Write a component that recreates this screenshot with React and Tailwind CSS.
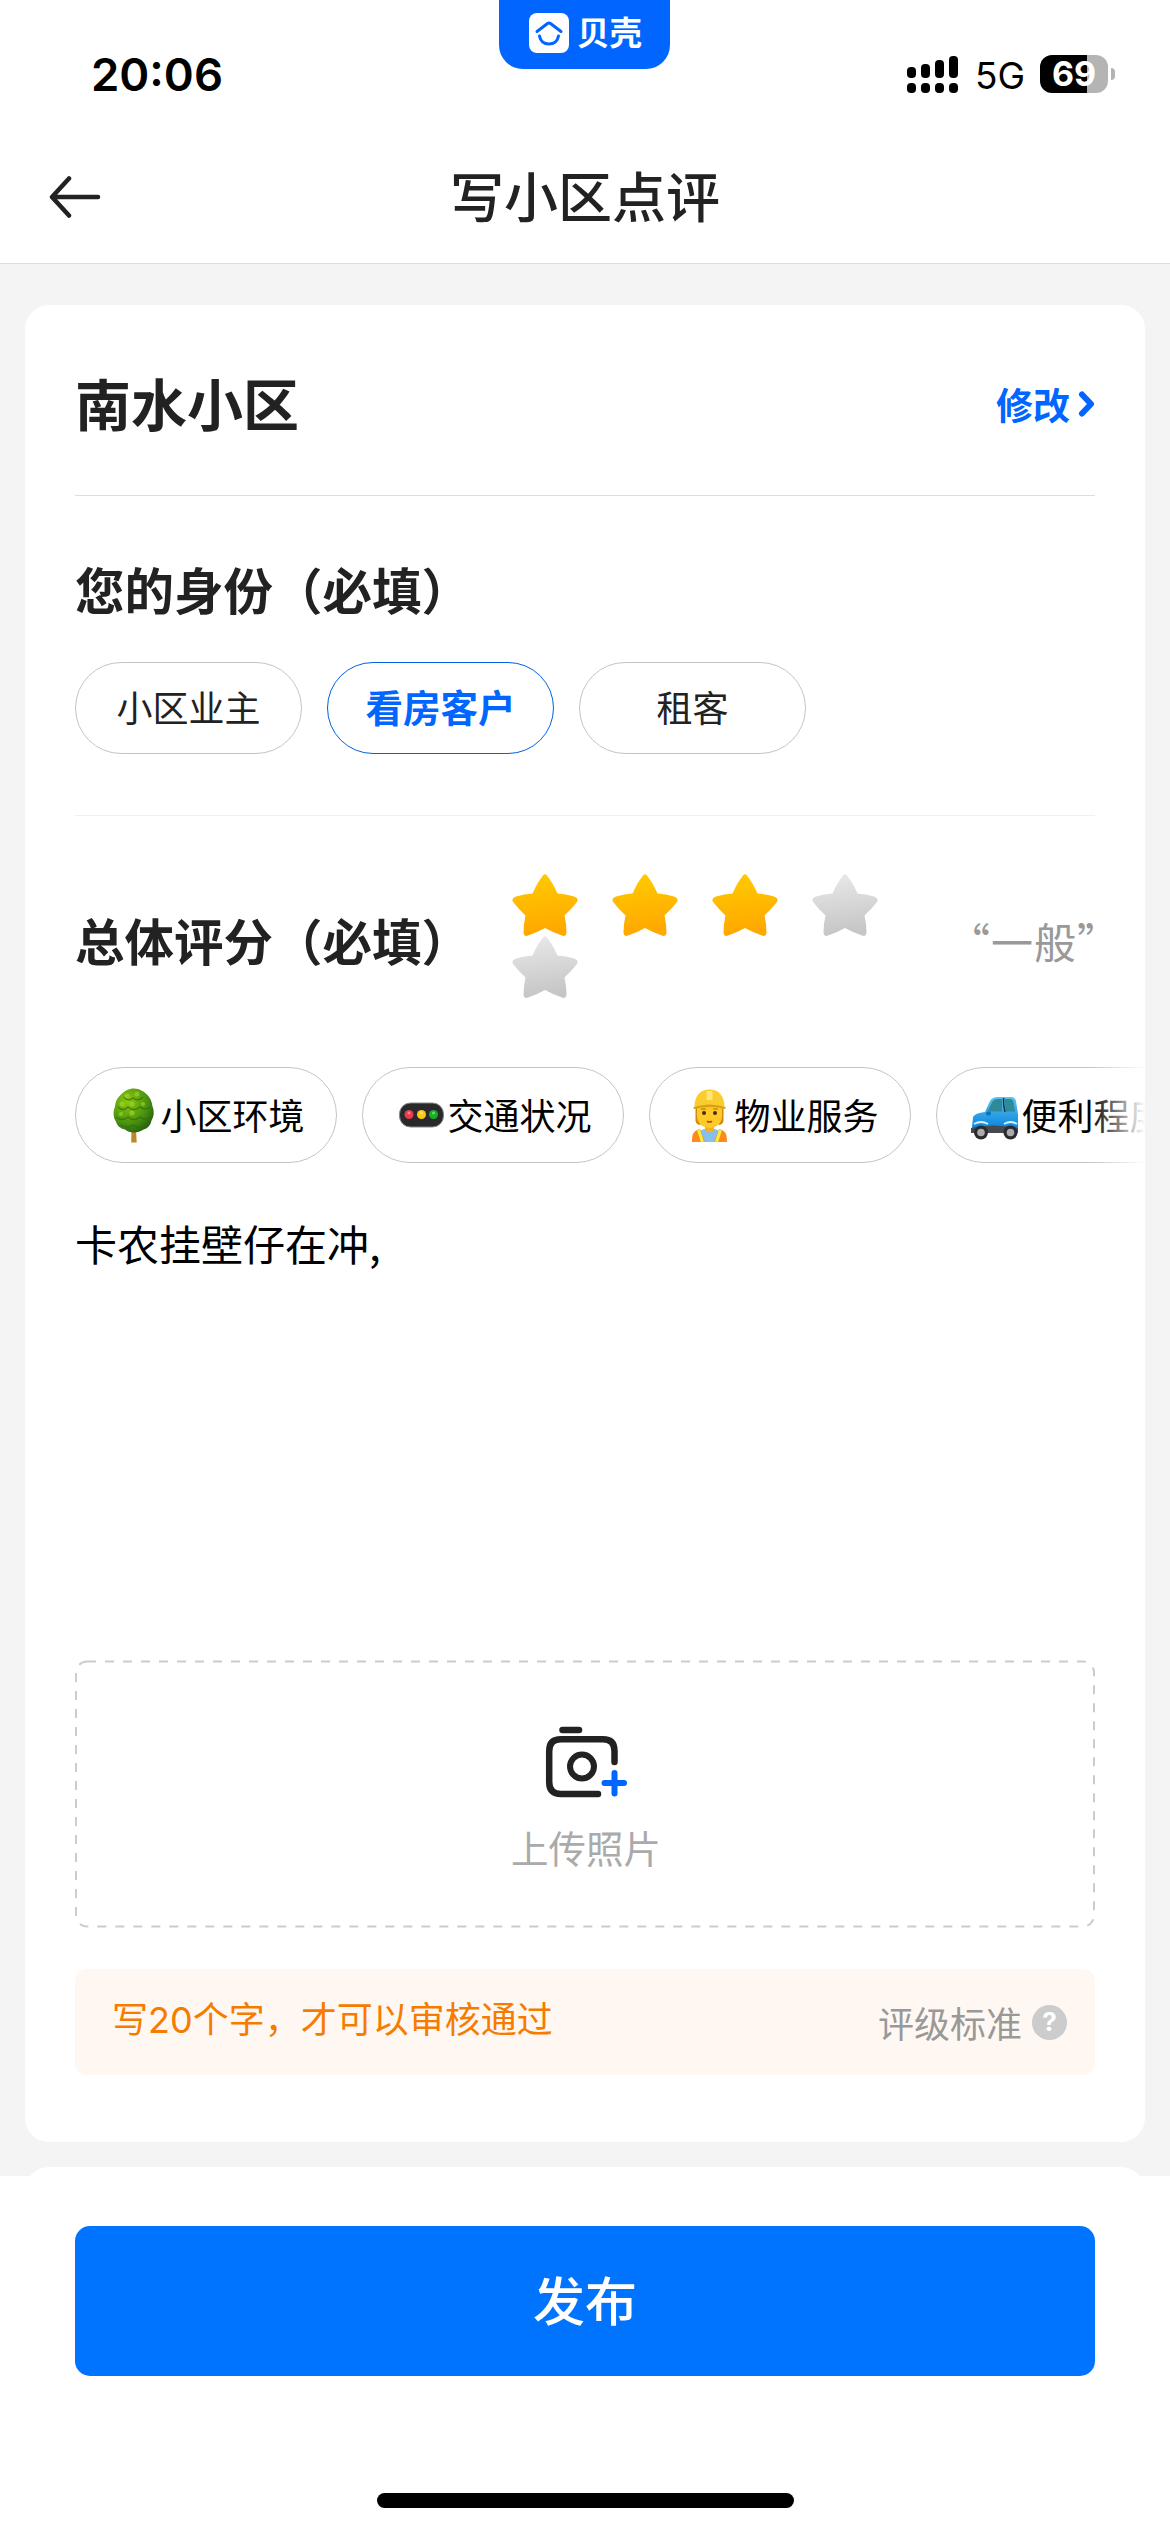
function Star({ on }) {
  const id = on ? "starOn" : "starOff";
  return (
    <svg viewBox="0 0 66 62" className="h-[62px] w-[66px]">
      <defs>
        <linearGradient id={id} x1="0" y1="0" x2="0.15" y2="1">
          <stop offset="0" stopColor={on ? "#ffcc00" : "#eaeaea"} />
          <stop offset="1" stopColor={on ? "#ffa800" : "#c6c6c6"} />
        </linearGradient>
      </defs>
      <path
        d="M31 1.500Q33 -1 35 1.500Q41 9 45.500 19.500Q54 20 62 22.500Q67.500 24.500 64.500 28.500Q59.500 35 52.500 41.500Q54.500 50 54.500 58.500Q54 63 50 61.500Q41 58.500 33 54Q25 58.500 16 61.500Q12 63 11.500 58.500Q11.500 50 13.500 41.500Q6.500 35 1.500 28.500Q-1.500 24.500 4 22.500Q12 20 20.500 19.500Q25 9 31 1.500Z"
        fill={"url(#" + id + ")"}
      />
    </svg>
  );
}

function Tree() {
  return (
    <svg viewBox="0 0 44 56" className="h-[56px] w-[44px]">
      <defs>
        <radialGradient id="tree" cx="0.35" cy="0.3" r="0.8">
          <stop offset="0" stopColor="#8cc80e" />
          <stop offset="0.6" stopColor="#4c9410" />
          <stop offset="1" stopColor="#1f5a10" />
        </radialGradient>
      </defs>
      <path d="M19.500 42h4.500l.7 13.500h-5.500z" fill="#b98a25" />
      <path d="M22 1.500c5 0 10 3 13 6 3 3 5 7 5.500 12 2 5 1.500 10-1 14-1 5-4 8-8 9-3 2-6 3-9.500 3s-7-1-9-3c-5-1-8-4-9-8-3-4-3-10-1-15 .5-5 2-8 5-11C12 4 17 1.500 22 1.500z" fill="url(#tree)" />
      <g fill="none" stroke="#2e6d0c" strokeWidth="1.500" opacity=".7">
        <path d="M12 10q4 5 9 1q5 4 10-1M6 20q5 5 10 0q6 5 12 0q5 4 10 0M4 30q6 5 12 0q6 5 12 0q5 4 11 0M9 38q6 4 12 0q7 5 13-1" />
      </g>
      <g fill="#a6d928" opacity=".6">
        <circle cx="15" cy="9" r="2.500" /><circle cx="25" cy="7" r="2.500" /><circle cx="10" cy="17" r="2.500" /><circle cx="20" cy="17" r="2.500" /><circle cx="9" cy="27" r="2" /><circle cx="20" cy="26" r="2.500" /><circle cx="31" cy="17" r="2" />
      </g>
    </svg>
  );
}

function Light() {
  return (
    <svg viewBox="0 0 46 56" className="h-[56px] w-[46px]">
      <rect x="0.500" y="16" width="44" height="24" rx="11" fill="#29292c" stroke="#88888c" strokeWidth="1" />
      <circle cx="10" cy="27.500" r="4.500" fill="#ec3a4c" />
      <circle cx="22.500" cy="27.500" r="4.500" fill="#ffc90e" />
      <circle cx="34.500" cy="27.500" r="4.500" fill="#14b022" />
      <g fill="#fff" opacity=".4"><circle cx="10" cy="26" r="1.500" /><circle cx="22.500" cy="26" r="1.500" /><circle cx="34.500" cy="26" r="1.500" /></g>
    </svg>
  );
}

function Worker() {
  return (
    <svg viewBox="0 0 46 56" className="h-[56px] w-[46px]">
      <path d="M11 55c0-8 3-13 8-13h9c5 0 8 5 8 13z" fill="#86bfee" />
      <path d="M6 55c0-8 1-11 8-13l5 13zM41 55c0-8-1-11-8-13l-5 13z" fill="#ff8a1c" />
      <path d="M12.500 43l4 12M34.500 43l-4 12" stroke="#f6ee3c" strokeWidth="3" />
      <path d="M19 37h9v6q-4.500 5-9 0z" fill="#f5b21c" />
      <path d="M9.500 20v14q1 4 5 4V20zM37.500 20v14q-1 4-5 4V20z" fill="#d08a14" />
      <path d="M11 19h25v9q0 12-12.500 13q-12.500-1-12.500-13z" fill="#ffc927" />
      <circle cx="18" cy="26" r="2" fill="#4a2c0d" /><circle cx="29" cy="26" r="2" fill="#4a2c0d" />
      <path d="M15.500 22h4M27.500 22h4" stroke="#a8700f" strokeWidth="1.200" strokeLinecap="round" />
      <path d="M21.500 34.500q2 1 4 0" stroke="#a84b16" strokeWidth="1.600" strokeLinecap="round" fill="none" />
      <path d="M8.500 20C8.500 8 15 2.500 23.500 2.500S38.500 8 38.500 20q-15-4-30 0z" fill="#f8cd2c" />
      <path d="M7.500 20q16-5 32 0v2q-16-4-32 0z" fill="#dba010" />
      <path d="M20.500 4h6v9h-6z" fill="#ffe477" />
    </svg>
  );
}

function Car() {
  return (
    <svg viewBox="0 0 50 56" className="ml-[-4px] h-[56px] w-[50px]">
      <defs>
        <linearGradient id="car" x1="0" y1="0" x2="0" y2="1">
          <stop offset="0" stopColor="#5cc3ee" /><stop offset="1" stopColor="#0b86df" />
        </linearGradient>
      </defs>
      <path d="M3 41L4 30q2-4 12-5l5-11q2-4 8-4h13q4 0 5 4l2 13v14z" fill="url(#car)" />
      <path d="M18.500 24.500l4.500-9q1.500-3.500 6-3.500h4v12.500zM35.500 12h5q3.500 0 4 3l1.500 9.500H37q-1.500-6-1.500-12.500z" fill="#2d8a96" />
      <path d="M34.500 11q-.5 7 1.500 14" stroke="#17334a" strokeWidth="1.500" fill="none" />
      <path d="M2 41q22-5 47 0v5H2z" fill="#47494e" />
      <path d="M5 37q7-4 14 0M35 37q7-4 13 0" stroke="#d5efff" strokeWidth="2" fill="none" />
      <ellipse cx="19.500" cy="26.500" rx="2.500" ry="2" fill="#0a6fc0" />
      <circle cx="12" cy="45.500" r="7" fill="#2a2b2e" /><circle cx="12" cy="45.500" r="3.800" fill="#a9abad" />
      <circle cx="41.500" cy="45.500" r="7" fill="#2a2b2e" /><circle cx="41.500" cy="45.500" r="3.800" fill="#a9abad" />
    </svg>
  );
}

function Camera() {
  return (
    <svg viewBox="0 0 84 74" className="h-[74px] w-[84px]" fill="none" strokeLinecap="round">
      <path d="M19.500 4H36" stroke="#222" strokeWidth="6.500" />
      <path d="M71.500 36V25Q71.500 13.300 60 13.300H18Q6.200 13.300 6.200 25V56Q6.200 68 18 68H55" stroke="#222" strokeWidth="6.500" />
      <circle cx="39" cy="40.500" r="12" stroke="#222" strokeWidth="6" />
      <path d="M71.500 47V67.500M61.500 57H81" stroke="#0066ff" strokeWidth="6" />
    </svg>
  );
}

const roles = ["小区业主", "看房客户", "租客"];
const tags = [
  [Tree, "小区环境"],
  [Light, "交通状况"],
  [Worker, "物业服务"],
  [Car, "便利程度"],
];

export default function App() {
  return (
    <div className='flex h-[2532px] w-[1170px] flex-col overflow-hidden bg-white font-["Noto_Sans_CJK_SC",sans-serif] text-[#222]'>
      <header className="flex h-[264px] shrink-0 flex-col border-b border-[#dedede]">
        <div className="grid h-[132px] grid-cols-[499px_171px_500px]">
          <div className='pt-[46px] pl-[91px] font-["Inter"] text-[45.500px] leading-[58px] font-semibold text-black'>20:06</div>
          <div className="flex h-[69px] items-center rounded-b-[24px] bg-[#0066ff] pb-[3px] pl-[30px]">
            <svg viewBox="0 0 40 40" className="h-[40px] w-[40px]">
              <rect width="40" height="40" rx="8" fill="#fff" />
              <path d="M8 18.500L18.500 10.500Q20 9.500 21.500 10.500L32 18.500M10.500 23Q12 31 20 31T29.500 23" fill="none" stroke="#0066ff" strokeWidth="3" strokeLinecap="round" strokeLinejoin="round" />
            </svg>
            <span className="ml-[8px] pb-[4px] text-[32.500px] leading-[40px] font-bold text-white">贝壳</span>
          </div>
          <div className="flex items-start pt-[55px] pl-[237px]">
            <svg viewBox="0 0 52 38" className="h-[38px] w-[52px]">
              <rect x="0" y="12" width="9" height="11" rx="4" /><rect x="14" y="9" width="9" height="14" rx="4" /><rect x="28" y="5" width="9" height="18" rx="4" /><rect x="42" y="1" width="9" height="22" rx="4" />
              <rect x="0" y="28" width="9" height="10" rx="4" /><rect x="14" y="28" width="9" height="10" rx="4" /><rect x="28" y="28" width="9" height="10" rx="4" /><rect x="42" y="28" width="9" height="10" rx="4" />
            </svg>
            <span className='ml-[16px] w-[65px] font-["Inter"] text-[37px] leading-[42px] text-black'>5G</span>
            <div className="flex items-center">
              <div className='h-[38px] w-[68px] rounded-[12px] bg-[linear-gradient(90deg,#000_69%,#b4b4b4_69%)] text-center font-["Inter"] text-[34px] leading-[38px] font-bold text-white'>69</div>
              <div className="ml-[3px] h-[12px] w-[4px] rounded-r-full bg-[#b4b4b4]" />
            </div>
          </div>
        </div>
        <div className="grid flex-1 grid-cols-[200px_1fr_200px] items-center">
          <svg viewBox="0 0 52 42" className="mb-[2px] ml-[49px] h-[42px] w-[52px]" fill="none" stroke="#222" strokeWidth="4.500" strokeLinecap="round" strokeLinejoin="round">
            <path d="M20 2.500L3 21L20 39.500M3 21H49" />
          </svg>
          <h1 className="pb-[5px] text-center text-[54px] leading-[60px] font-medium">写小区点评</h1>
        </div>
      </header>

      <main className="flex h-[1912px] shrink-0 flex-col gap-[25px] overflow-hidden bg-[#f4f4f4] px-[25px] pt-[41px]">
        <section className="flex h-[1837px] shrink-0 flex-col rounded-[24px] bg-white px-[50px]">
          <div className="flex h-[191px] shrink-0 items-center justify-between border-b border-[#dedede] pt-[9px]">
            <h2 className="pb-[6px] text-[56px] leading-[60px] font-bold">南水小区</h2>
            <span className="flex items-center pb-[1px] text-[37px] leading-[40px] font-bold text-[#0066ff]">
              修改
              <svg viewBox="0 0 17 26" className="ml-[8px] h-[26px] w-[17px]" fill="none" stroke="#0066ff" strokeWidth="6" strokeLinecap="round" strokeLinejoin="round"><path d="M4 3.500L13 13L4 22.500" /></svg>
            </span>
          </div>
          <h3 className="mt-[61px] h-[64px] text-[49.500px] leading-[64px] font-bold">您的身份（必填）</h3>
          <div className="mt-[41px] flex gap-[25px]">
            {roles.map((r, i) => (
              <div key={r} className={i === 1 ? "flex h-[92px] w-[227px] items-center justify-center rounded-full border border-[#0060e6] pb-[4px] text-[37.500px] font-bold text-[#0066ff]" : "flex h-[92px] w-[227px] items-center justify-center rounded-full border border-[#c4c4c4] pb-[4px] text-[36px]"}>{r}</div>
            ))}
          </div>
          <div className="mt-[61px] h-px shrink-0 bg-[#f0f0f0]" />
          <div className="flex h-[251px] shrink-0 items-center">
            <h3 className="w-[437px] pb-[3px] text-[49.500px] leading-[64px] font-bold">总体评分（必填）</h3>
            <div className="flex w-[400px] shrink-0 flex-wrap gap-x-[34px] pb-[12px]">
              {[1, 1, 1, 0, 0].map((on, i) => <Star key={i} on={on} />)}
            </div>
            <span className="mr-[-25px] flex-1 pb-[2px] text-right text-[42px] tracking-[1px] whitespace-nowrap text-[#999]">“一般”</span>
          </div>
          <div className="relative mr-[-50px] flex h-[96px] shrink-0 gap-[25px] overflow-hidden">
            {tags.map(([Icon, t]) => (
              <div key={t} className="flex w-[262px] shrink-0 items-center rounded-full border border-[#c4c4c4] pl-[36px] text-[36px] text-black">
                <span className="flex w-[48.500px] shrink-0"><Icon /></span>
                <span className="pb-[3px] whitespace-nowrap">{t}</span>
              </div>
            ))}
            <div className="absolute top-0 right-0 h-full w-[55px] bg-linear-to-r from-white/0 to-white" />
          </div>
          <p className="mt-[50px] h-[447px] shrink-0 text-[42px] leading-[60px] text-black">卡农挂壁仔在冲,</p>
          <div className="relative flex h-[268px] shrink-0 flex-col items-center pt-[66px]">
            <svg className="absolute inset-0 h-full w-full"><rect x="1" y="1.500" width="1018" height="265" rx="11" fill="none" stroke="#ccc" strokeWidth="2" strokeDasharray="9 9" /></svg>
            <Camera />
            <span className="mt-[22px] ml-[2px] text-[37.500px] leading-[50px] text-[#aaa]">上传照片</span>
          </div>
          <div className="mt-[41px] flex h-[106px] shrink-0 items-center justify-between rounded-[12px] bg-[#fff8f2] pr-[28px] pl-[37px]">
            <span className="pb-[8px] text-[36px] text-[#f57c00]">写<span className='font-["Inter"] text-[36px]'>20</span>个字，才可以审核通过</span>
            <span className="flex items-center text-[36px] text-[#999]">
              <span className="pb-[1px]">评级标准</span>
              <span className='ml-[10px] flex h-[35px] w-[35px] items-center justify-center rounded-full bg-[#ccc] font-["Inter"] text-[26px] leading-none font-bold text-white'>?</span>
            </span>
          </div>
        </section>
        <section className="h-[100px] shrink-0 rounded-t-[24px] bg-white" />
      </main>

      <footer className="flex flex-1 flex-col items-center pt-[50px]">
        <button className="h-[150px] w-[1020px] rounded-[15px] bg-[#0074ff] pb-[5px] text-[52px] font-medium text-white">发布</button>
        <div className="mt-[117px] h-[15px] w-[417px] rounded-full bg-black" />
      </footer>
    </div>
  );
}
